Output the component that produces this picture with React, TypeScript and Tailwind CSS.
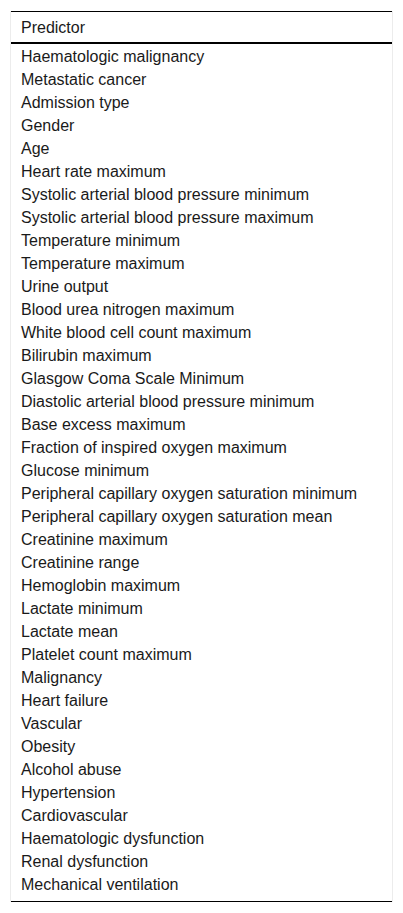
const predictors = [
  'Haematologic malignancy',
  'Metastatic cancer',
  'Admission type',
  'Gender',
  'Age',
  'Heart rate maximum',
  'Systolic arterial blood pressure minimum',
  'Systolic arterial blood pressure maximum',
  'Temperature minimum',
  'Temperature maximum',
  'Urine output',
  'Blood urea nitrogen maximum',
  'White blood cell count maximum',
  'Bilirubin maximum',
  'Glasgow Coma Scale Minimum',
  'Diastolic arterial blood pressure minimum',
  'Base excess maximum',
  'Fraction of inspired oxygen maximum',
  'Glucose minimum',
  'Peripheral capillary oxygen saturation minimum',
  'Peripheral capillary oxygen saturation mean',
  'Creatinine maximum',
  'Creatinine range',
  'Hemoglobin maximum',
  'Lactate minimum',
  'Lactate mean',
  'Platelet count maximum',
  'Malignancy',
  'Heart failure',
  'Vascular',
  'Obesity',
  'Alcohol abuse',
  'Hypertension',
  'Cardiovascular',
  'Haematologic dysfunction',
  'Renal dysfunction',
  'Mechanical ventilation',
];

export default function App() {
  return (
    <div className="w-[403px] h-[913px] bg-white pt-[11px] px-[10px] font-['Liberation_Sans',Arial,sans-serif] text-[16px] text-[#1a1a1a]">
      <div className="border-x border-[#ececec]">
        <table className="w-full border-collapse">
          <thead>
            <tr className="border-t border-black border-b-2">
              <th className="h-[31px] px-[10px] pt-[2px] pb-0 text-left font-normal">Predictor</th>
            </tr>
          </thead>
          <tbody className="border-b border-black">
            {predictors.map((p, i) => (
              <tr key={p}>
                <td className={`px-[10px] pt-[2px] leading-[21px] ${i === predictors.length - 1 ? 'pb-[6px] h-[29px]' : 'pb-0 h-[23px]'}`}>
                  {p}
                </td>
              </tr>
            ))}
          </tbody>
        </table>
      </div>
    </div>
  );
}
